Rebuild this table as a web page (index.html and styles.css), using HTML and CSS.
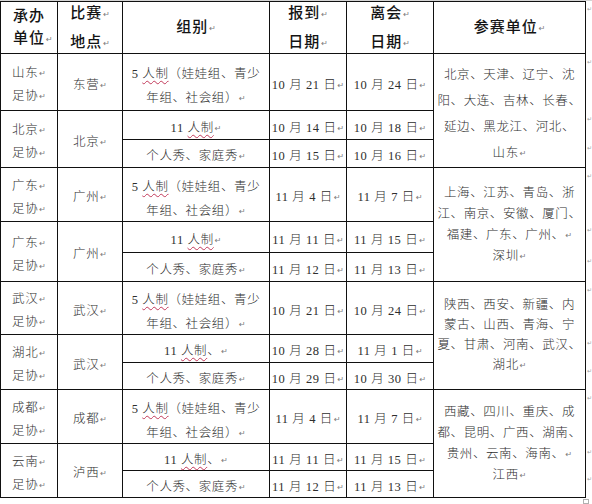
FILE: index.html
```html
<!DOCTYPE html>
<html lang="zh-CN">
<head>
<meta charset="utf-8">
<title>赛事安排</title>
<link rel="stylesheet" href="styles.css">
</head>
<body>
<div class="page">
  <div class="sheet">
    <div class="c h first"><p class="left">承办<br>单位<i>↵</i></p></div>
    <div class="c h"><p>比赛<i>↵</i></p><p>地点<i>↵</i></p></div>
    <div class="c h"><p>组别<i>↵</i></p></div>
    <div class="c h"><p>报到<i>↵</i></p><p>日期<i>↵</i></p></div>
    <div class="c h"><p>离会<i>↵</i></p><p>日期<i>↵</i></p></div>
    <div class="c h"><p>参赛单位<i>↵</i></p></div>
    <div class="m">↵</div>

    <div class="c first"><p>山东<i>↵</i></p><p>足协<i>↵</i></p></div>
    <div class="c"><p>东营<i>↵</i></p></div>
    <div class="c two"><p>5 <span class="sp">人制</span>（娃娃组、青少<br>年组、社会组）<i>↵</i></p></div>
    <div class="c"><p>10 月 21 日<i>↵</i></p></div>
    <div class="c"><p>10 月 24 日<i>↵</i></p></div>
    <div class="c g g1 span3"><p>北京、天津、辽宁、沈<br>阳、大连、吉林、长春、<br>延边、黑龙江、河北、<br>山东<i>↵</i></p></div>
    <div class="m">↵</div>

    <div class="c first span2"><p>北京<i>↵</i></p><p>足协<i>↵</i></p></div>
    <div class="c span2"><p>北京<i>↵</i></p></div>
    <div class="c"><p>11 <span class="sp">人制</span><i>↵</i></p></div>
    <div class="c"><p>10 月 14 日<i>↵</i></p></div>
    <div class="c"><p>10 月 18 日<i>↵</i></p></div>
    <div class="m">↵</div>

    <div class="c"><p>个人秀、家庭秀<i>↵</i></p></div>
    <div class="c"><p>10 月 15 日<i>↵</i></p></div>
    <div class="c"><p>10 月 16 日<i>↵</i></p></div>
    <div class="m">↵</div>

    <div class="c first"><p>广东<i>↵</i></p><p>足协<i>↵</i></p></div>
    <div class="c"><p>广州<i>↵</i></p></div>
    <div class="c two"><p>5 <span class="sp">人制</span>（娃娃组、青少<br>年组、社会组）<i>↵</i></p></div>
    <div class="c"><p>11 月 4 日<i>↵</i></p></div>
    <div class="c"><p>11 月 7 日<i>↵</i></p></div>
    <div class="c g span3"><p>上海、江苏、青岛、浙<br>江、南京、安徽、厦门、<br>福建、广东、广州、<i>↵</i><br>深圳<i>↵</i></p></div>
    <div class="m">↵</div>

    <div class="c first span2"><p>广东<i>↵</i></p><p>足协<i>↵</i></p></div>
    <div class="c span2"><p>广州<i>↵</i></p></div>
    <div class="c"><p>11 <span class="sp">人制</span><i>↵</i></p></div>
    <div class="c"><p>11 月 11 日<i>↵</i></p></div>
    <div class="c"><p>11 月 15 日<i>↵</i></p></div>
    <div class="m">↵</div>

    <div class="c"><p>个人秀、家庭秀<i>↵</i></p></div>
    <div class="c"><p>11 月 12 日<i>↵</i></p></div>
    <div class="c"><p>11 月 13 日<i>↵</i></p></div>
    <div class="m">↵</div>

    <div class="c first"><p>武汉<i>↵</i></p><p>足协<i>↵</i></p></div>
    <div class="c"><p>武汉<i>↵</i></p></div>
    <div class="c two"><p>5 <span class="sp">人制</span>（娃娃组、青少<br>年组、社会组）<i>↵</i></p></div>
    <div class="c"><p>10 月 21 日<i>↵</i></p></div>
    <div class="c"><p>10 月 24 日<i>↵</i></p></div>
    <div class="c g g3 span3"><p>陕西、西安、新疆、内<br>蒙古、山西、青海、宁<br>夏、甘肃、河南、武汉、<br>湖北<i>↵</i></p></div>
    <div class="m">↵</div>

    <div class="c first span2"><p>湖北<i>↵</i></p><p>足协<i>↵</i></p></div>
    <div class="c span2"><p>武汉<i>↵</i></p></div>
    <div class="c"><p>11 <span class="sp">人制</span>、<i>↵</i></p></div>
    <div class="c"><p>10 月 28 日<i>↵</i></p></div>
    <div class="c"><p>11 月 1 日<i>↵</i></p></div>
    <div class="m">↵</div>

    <div class="c"><p>个人秀、家庭秀<i>↵</i></p></div>
    <div class="c"><p>10 月 29 日<i>↵</i></p></div>
    <div class="c"><p>10 月 30 日<i>↵</i></p></div>
    <div class="m">↵</div>

    <div class="c first"><p>成都<i>↵</i></p><p>足协<i>↵</i></p></div>
    <div class="c"><p>成都<i>↵</i></p></div>
    <div class="c two"><p>5 <span class="sp">人制</span>（娃娃组、青少<br>年组、社会组）<i>↵</i></p></div>
    <div class="c"><p>11 月 4 日<i>↵</i></p></div>
    <div class="c"><p>11 月 7 日<i>↵</i></p></div>
    <div class="c g span3"><p>西藏、四川、重庆、成<br>都、昆明、广西、湖南、<br>贵州、云南、海南、<i>↵</i><br>江西<i>↵</i></p></div>
    <div class="m">↵</div>

    <div class="c first span2"><p>云南<i>↵</i></p><p>足协<i>↵</i></p></div>
    <div class="c span2"><p>泸西<i>↵</i></p></div>
    <div class="c"><p>11 <span class="sp">人制</span>、<i>↵</i></p></div>
    <div class="c"><p>11 月 11 日<i>↵</i></p></div>
    <div class="c"><p>11 月 15 日<i>↵</i></p></div>
    <div class="m">↵</div>

    <div class="c"><p>个人秀、家庭秀<i>↵</i></p></div>
    <div class="c"><p>11 月 12 日<i>↵</i></p></div>
    <div class="c"><p>11 月 13 日<i>↵</i></p></div>
    <div class="m">↵</div>
  </div>
  <div class="handle"></div>
</div>
</body>
</html>
```

FILE: styles.css
```css
* {
  box-sizing: border-box;
  margin: 0;
  padding: 0;
}

body {
  background: #ffffff;
}

.page {
  position: relative;
  width: 592px;
  height: 504px;
  border-top: 1px solid #d4d4d4;
  overflow: hidden;
  background: #ffffff;
}

.sheet {
  display: grid;
  grid-template-columns: 58px 65px 147px 77px 87px 152px 6px;
  grid-template-rows: 53px 57px 29px 28px 54px 31px 29px 53px 28px 27px 54px 27px 27px;
  font-family: "Liberation Serif", "Noto Sans CJK SC", serif;
  font-size: 12.5px;
  font-weight: 300;
  color: #2e2e2e;
  letter-spacing: 0.6px;
}

.c {
  display: flex;
  flex-direction: column;
  justify-content: center;
  align-items: center;
  text-align: center;
  white-space: nowrap;
  line-height: 22px;
  padding-top: 6px;
  border-right: 1px solid #111111;
  border-bottom: 1px solid #111111;
}

.first {
  border-left: 1px solid #111111;
}

.h {
  border-top: 1px solid #111111;
  font-size: 15px;
  font-weight: 500;
  color: #141414;
  letter-spacing: 1px;
  gap: 5px;
  padding-top: 1px;
}

.h .left {
  align-self: flex-start;
  text-align: left;
  padding-left: 12px;
}

.first.h {
  gap: 0;
}

.two {
  line-height: 24px;
  padding-top: 9px;
}

.g {
  line-height: 21px;
  padding-top: 0;
}

.g1 {
  line-height: 26px;
  padding-top: 8px;
}

.g3 {
  line-height: 20px;
}

.span2 {
  grid-row: span 2;
}

.span3 {
  grid-row: span 3;
}

.sp {
  text-decoration: underline wavy #c23a5a;
  text-decoration-thickness: 1px;
  text-underline-offset: 2px;
}

i {
  font-style: normal;
  font-family: "DejaVu Sans", sans-serif;
  font-weight: 400;
  font-size: 8px;
  color: #7a7a7a;
  letter-spacing: 0;
  margin-left: 1px;
  vertical-align: 1px;
}

.m {
  font-family: "DejaVu Sans", sans-serif;
  font-size: 6px;
  line-height: 10px;
  color: #a0a0a0;
  padding-top: 3px;
  padding-left: 1px;
  text-align: left;
  overflow: visible;
}

.handle {
  position: absolute;
  left: 583px;
  top: 498px;
  width: 6px;
  height: 5px;
  border: 1px solid #b0b0b0;
}
```
